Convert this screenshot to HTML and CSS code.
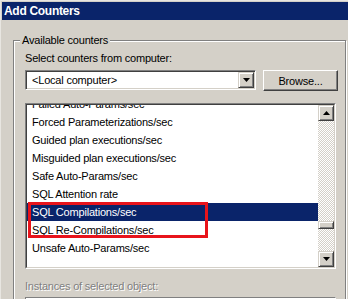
FILE: index.html
```html
<!DOCTYPE html>
<html lang="en">
<head>
    <meta charset="UTF-8">
    <title>Add Counters</title>
    <link rel="stylesheet" href="styles.css">
</head>
<body>
    <div class="window">
        <div class="titlebar">Add Counters</div>

        <fieldset class="group">
            <legend>Available counters</legend>

            <div class="label">Select counters from computer:</div>
            <div class="machine-row">
                <div class="combo">
                    <span class="combo-text">&lt;Local computer&gt;</span>
                    <span class="combo-btn">
                        <svg width="7" height="4" viewBox="0 0 7 4"><polygon points="0,0 7,0 3.5,4" fill="#000"/></svg>
                    </span>
                </div>
                <button class="btn">Browse...</button>
            </div>

            <div class="listbox">
                <div class="listbox-inner">
                    <ul class="counter-list">
                        <li>Failed Auto-Params/sec</li>
                        <li>Forced Parameterizations/sec</li>
                        <li>Guided plan executions/sec</li>
                        <li>Misguided plan executions/sec</li>
                        <li>Safe Auto-Params/sec</li>
                        <li>SQL Attention rate</li>
                        <li class="selected">SQL Compilations/sec</li>
                        <li>SQL Re-Compilations/sec</li>
                        <li>Unsafe Auto-Params/sec</li>
                    </ul>
                    <div class="scrollbar">
                        <div class="scroll-btn">
                            <svg width="7" height="4" viewBox="0 0 7 4"><polygon points="0,4 7,4 3.5,0" fill="#000"/></svg>
                        </div>
                        <div class="scroll-track">
                            <div class="scroll-thumb"></div>
                        </div>
                        <div class="scroll-btn">
                            <svg width="7" height="4" viewBox="0 0 7 4"><polygon points="0,0 7,0 3.5,4" fill="#000"/></svg>
                        </div>
                    </div>
                </div>
                <!-- annotation drawn over the two SQL compilation counters -->
                <div class="callout"></div>
            </div>

            <div class="label disabled">Instances of selected object:</div>
            <div class="listbox instances"></div>
        </fieldset>
    </div>
</body>
</html>
```

FILE: styles.css
```css
body {
    margin: 0;
    font-family: 'Liberation Sans', Arial, sans-serif;
    font-size: 11px;
    letter-spacing: -0.2px;
    color: #000;
    background: #d4d0c8;
}

.window {
    width: 348px;
    height: 299px;
    box-sizing: border-box;
    padding: 2px 0 0 2px;
    overflow: hidden;
    background: #d4d0c8;
    box-shadow: inset 1px 1px 0 #e8e6e1;
}

.titlebar {
    height: 18px;
    line-height: 18px;
    padding-left: 2px;
    background: #0a246a;
    color: #fff;
    font-weight: bold;
    font-size: 12px;
    letter-spacing: -0.3px;
}

.group {
    margin: 14px 0 0 11px;
    width: 333px;
    box-sizing: border-box;
    height: 300px;
    padding: 5px 0 0 11px;
    border: 1px solid #808080;
    box-shadow: inset 1px 1px 0 #fff, 1px 1px 0 #fff;
}

.group legend {
    margin-left: -5px;
    padding: 0 2px;
    line-height: 13px;
    background: #d4d0c8;
}

.label {
    line-height: 13px;
}

.label.disabled {
    margin-top: 11px;
    color: #808080;
    text-shadow: 1px 1px 0 #fff;
}

.machine-row {
    display: flex;
    align-items: flex-start;
    gap: 7px;
    margin-top: 5px;
}

.combo {
    width: 231px;
    height: 20px;
    box-sizing: border-box;
    display: flex;
    align-items: center;
    background: #fff;
    border: 1px solid;
    border-color: #808080 #fff #fff #808080;
    box-shadow: inset 1px 1px 0 #404040, inset -1px -1px 0 #d4d0c8;
}

.combo-text {
    flex: 1;
    padding-left: 6px;
}

.combo-btn {
    width: 16px;
    height: 16px;
    margin-right: 1px;
    box-sizing: border-box;
    display: flex;
    align-items: center;
    justify-content: center;
    background: #d4d0c8;
    border: 1px solid;
    border-color: #d4d0c8 #404040 #404040 #d4d0c8;
    box-shadow: inset 1px 1px 0 #fff, inset -1px -1px 0 #808080;
}

.btn {
    width: 75px;
    height: 21px;
    padding: 0;
    font-family: inherit;
    font-size: 11px;
    letter-spacing: inherit;
    color: #000;
    background: #d4d0c8;
    border: 1px solid;
    border-color: #fff #404040 #404040 #fff;
    box-shadow: inset -1px -1px 0 #808080;
}

.listbox {
    position: relative;
    width: 311px;
    height: 166px;
    margin-top: 12px;
    box-sizing: border-box;
    border: 1px solid;
    border-color: #808080 #fff #fff #808080;
    background: #fff;
}

.listbox-inner {
    height: 100%;
    display: flex;
    box-sizing: border-box;
    border: 1px solid;
    border-color: #404040 #d4d0c8 #d4d0c8 #404040;
}

.counter-list {
    flex: 1;
    list-style: none;
    margin: 0;
    padding: 0;
    overflow: hidden;
}

.counter-list li {
    height: 18px;
    line-height: 18px;
    padding-left: 5px;
    white-space: nowrap;
}

.counter-list li:first-child {
    margin-top: -10px;
}

.counter-list li.selected {
    background: #0a246a;
    color: #fff;
}

.callout {
    position: absolute;
    left: 2px;
    top: 98px;
    width: 180px;
    height: 36px;
    box-sizing: border-box;
    border: 3px solid #e8141b;
}

.scrollbar {
    width: 16px;
    display: flex;
    flex-direction: column;
}

.scroll-btn,
.scroll-thumb {
    box-sizing: border-box;
    background: #d4d0c8;
    border: 1px solid;
    border-color: #d4d0c8 #404040 #404040 #d4d0c8;
    box-shadow: inset 1px 1px 0 #fff, inset -1px -1px 0 #808080;
}

.scroll-btn {
    height: 16px;
    display: flex;
    align-items: center;
    justify-content: center;
}

.scroll-track {
    flex: 1;
    background-image: conic-gradient(#fff 25%, #d4d0c8 0 50%, #fff 0 75%, #d4d0c8 0);
    background-size: 2px 2px;
}

.scroll-thumb {
    height: 8px;
    margin-top: 100px;
}

.listbox.instances {
    margin-top: 4px;
    height: 60px;
}
```
